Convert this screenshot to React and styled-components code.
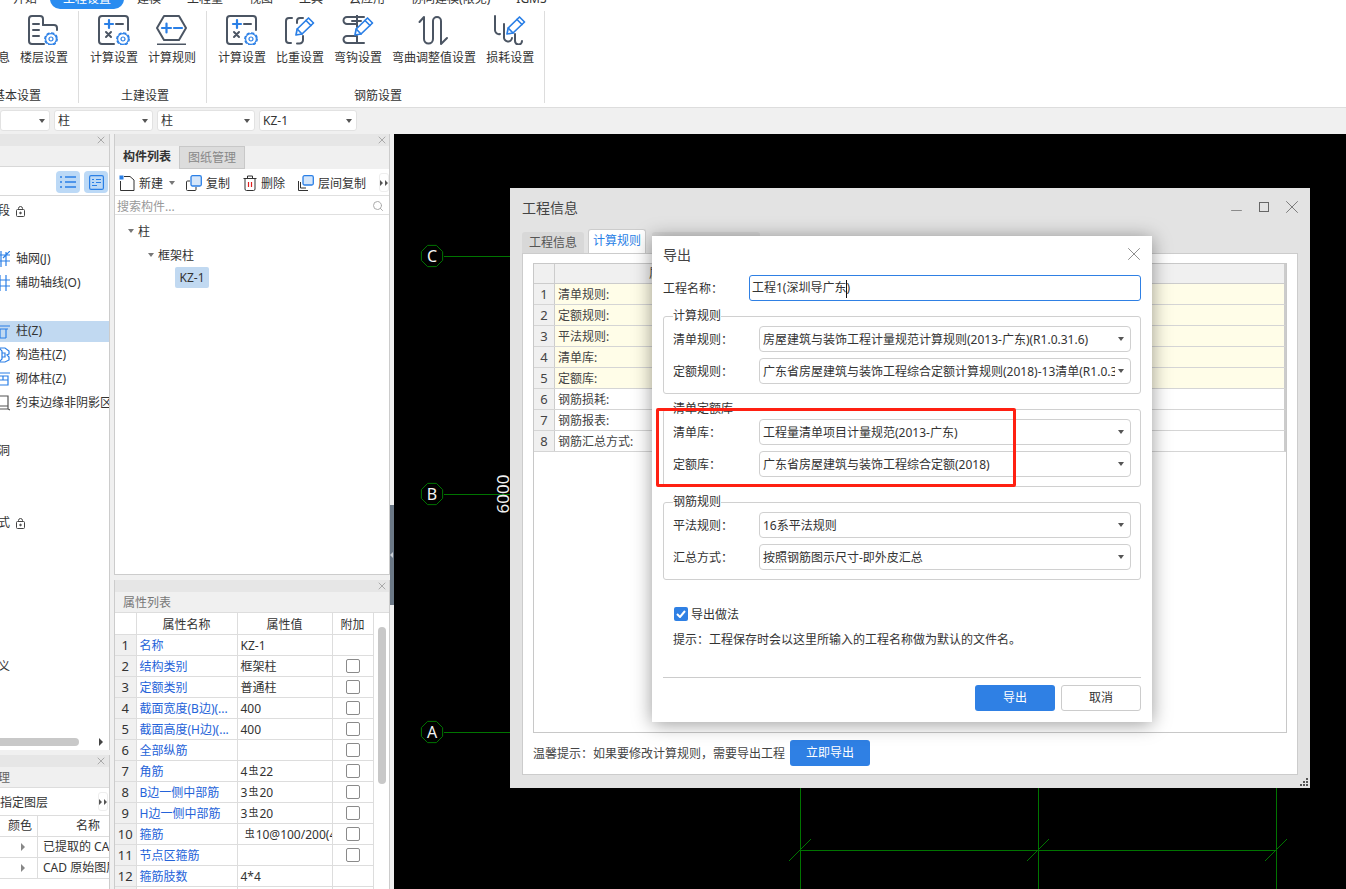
import React from 'react'
import styled, { createGlobalStyle } from 'styled-components'
import { X, Minus, Search } from 'lucide-react'

const DARK = '#4b5563'
const BLUE = '#2a7fe6'
const GRID = '#007400'

const GlobalStyle = createGlobalStyle`
  html, body {
    margin: 0;
    padding: 0;
    background: #f0f0f0;
  }
  body {
    font-family: "Noto Sans", "Noto Sans CJK SC", sans-serif;
    font-size: 12px;
    color: #333;
    overflow: hidden;
  }
  * { box-sizing: border-box; }
`

const Gear = ({ x, y }) => (
  <g transform={`translate(${x} ${y})`} fill="none" stroke={BLUE}>
    <circle r="5.4" strokeWidth="1.2" />
    <circle r="6.2" strokeWidth="1.4" strokeDasharray="2.2 2.66" />
    <circle r="2" strokeWidth="1.2" />
  </g>
)

const Pencil = ({ x, y }) => (
  <g transform={`translate(${x} ${y})`} fill="#fff" stroke={BLUE} strokeWidth="1.7" strokeLinejoin="round">
    <path d="M0 18 L1.2 12 L12.5 1 L17.5 6 L6 17 Z" />
    <path d="M1.2 12 L6 17 M10 3.5 L15 8.5" fill="none" />
  </g>
)

const Ico = ({ children }) => (
  <svg width="32" height="30" viewBox="0 0 32 30" fill="none" stroke={DARK} strokeWidth="2" strokeLinecap="round" strokeLinejoin="round">
    {children}
  </svg>
)

const FloorIcon = () => (
  <Ico>
    <path d="M15 10 V4 a3 3 0 0 0-3-3 H4 a3 3 0 0 0-3 3 V26 a3 3 0 0 0 3 3 H16" />
    <path d="M15 10 H26 a3 3 0 0 1 3 3 V15" />
    <path d="M5 9 H11 M5 15 H11 M5 21 H11" />
    <Gear x={23} y={24} />
  </Ico>
)

const CalcIcon = () => (
  <Ico>
    <path d="M30 15 V4 a3 3 0 0 0-3-3 H4 a3 3 0 0 0-3 3 V26 a3 3 0 0 0 3 3 H16" />
    <path d="M7 9 H15 M11 5 V13" stroke={BLUE} strokeWidth="2.2" />
    <path d="M18 9 H25" />
    <path d="M8 17 L13 22 M13 17 L8 22" />
    <Gear x={25} y={24} />
  </Ico>
)

const RuleIcon = () => (
  <Ico>
    <path d="M8 1 H23 L30 13 L23 25 H8 L1 13 Z" />
    <path d="M6 13 H15 M10.5 8.5 V17.5 M18 13 H26" stroke={BLUE} strokeWidth="2.2" />
    <path d="M1 29.5 H30" strokeLinecap="butt" />
  </Ico>
)

const RatioIcon = () => (
  <Ico>
    <path d="M8 3 H5 a3 3 0 0 0-3 3 V25 a3 3 0 0 0 3 3 H7" />
    <path d="M13 8 V6 a3 3 0 0 1 3-3 H19" />
    <path d="M19 21 V25 a3.5 3.5 0 0 1-3.5 3.5 H13" />
    <Pencil x={12} y={2} />
  </Ico>
)

const HookIcon = () => (
  <Ico>
    <path d="M22 2 H5 a3.5 3.5 0 0 0 0 7 H15" />
    <path d="M15 0 V12 M10 6 H19" />
    <path d="M15 21 V28 M22 28 H5 a3.5 3.5 0 0 1 0-7 H15" />
    <Pencil x={13} y={2} />
  </Ico>
)

const BendIcon = () => (
  <Ico>
    <path d="M1.5 7 L6 2 V24 a4.5 4.5 0 0 0 9 0 V6 a4 4 0 0 1 8 0 V29 L29 23" />
  </Ico>
)

const LossIcon = () => (
  <Ico>
    <path d="M1 1 V15 a4 4 0 0 0 5 4" />
    <path d="M10 9 V22 a4 4 0 0 0 8 1" />
    <path d="M21 19 V26 a3.5 3.5 0 0 0 7 0" />
    <Pencil x={13} y={1} />
  </Ico>
)

const MoreIcon = () => (
  <svg width="8" height="6" viewBox="0 0 8 6" fill="#555">
    <path d="M0 0 L3 3 L0 6 Z M5 0 L8 3 L5 6 Z" />
  </svg>
)

const topTabs = ['开始', '工程设置', '建模', '工程量', '视图', '工具', '云应用', '协同建模(限免)', 'IGMS']

const ribbonGroups = [
  {
    title: '基本设置',
    items: [
      { label: '工程信息', icon: <FloorIcon /> },
      { label: '楼层设置', icon: <FloorIcon /> },
    ],
  },
  {
    title: '土建设置',
    items: [
      { label: '计算设置', icon: <CalcIcon /> },
      { label: '计算规则', icon: <RuleIcon /> },
    ],
  },
  {
    title: '钢筋设置',
    items: [
      { label: '计算设置', icon: <CalcIcon /> },
      { label: '比重设置', icon: <RatioIcon /> },
      { label: '弯钩设置', icon: <HookIcon /> },
      { label: '弯曲调整值设置', icon: <BendIcon /> },
      { label: '损耗设置', icon: <LossIcon /> },
    ],
  },
]

const LockIcon = () => (
  <svg width="9" height="11" viewBox="0 0 9 11" fill="none" stroke="#444" strokeWidth="1">
    <rect x="0.5" y="3.5" width="8" height="7" rx="1" />
    <path d="M2.5 3.5 V2.5 a2 2 0 0 1 4 0 V3.5" />
    <circle cx="4.5" cy="7" r="0.8" fill="#444" />
  </svg>
)

const RowIcon = ({ kind }) => (
  <svg width="14" height="16" viewBox="0 0 14 16" fill="none" stroke="#2a7fe6" strokeWidth="1.2">
    {kind === 'axis' && <path d="M0 4 H14 M0 10 H14 M5 0 V16 M10 1 V15 M14 0 L7 7" />}
    {kind === 'aux' && <path d="M0 5 H14 M0 11 H14 M4 0 V16 M10 0 V16" />}
    {kind === 'col' && <path d="M0 3 H14 M2 6 H12 M4 6 V15 H10 M10 6 V15" />}
    {kind === 'tie' && <path d="M3 1 H9 L13 4 V7 L11 8 L13 10 V13 L9 15 H3 L6 12 V4 Z M6 6 H9 V10 H6" />}
    {kind === 'brick' && <path d="M0 2 H14 M2 5 H12 V14 H2 M2 9 H12 M7 5 V9" />}
    {kind === 'edge' && <path d="M3 1 H12 V14 H1 M12 14 L14 15 M3 14 V11 H12" stroke="#555" />}
  </svg>
)

const leftRows = [
  { text: '段', lock: true },
  {},
  { text: '轴网(J)', icon: 'axis' },
  { text: '辅助轴线(O)', icon: 'aux' },
  {},
  { text: '柱(Z)', icon: 'col', active: true },
  { text: '构造柱(Z)', icon: 'tie' },
  { text: '砌体柱(Z)', icon: 'brick' },
  { text: '约束边缘非阴影区', icon: 'edge' },
  {},
  { text: '洞' },
  {},
  {},
  { text: '式', lock: true },
  {},
  {},
  {},
  {},
  {},
  { text: '义' },
]

const Rebar = () => <RebarMark>虫</RebarMark>

const attrs = [
  { name: '名称', value: 'KZ-1', noCheck: true },
  { name: '结构类别', value: '框架柱' },
  { name: '定额类别', value: '普通柱' },
  { name: '截面宽度(B边)(...', value: '400' },
  { name: '截面高度(H边)(...', value: '400' },
  { name: '全部纵筋', value: '' },
  { name: '角筋', value: <>4<Rebar />22</> },
  { name: 'B边一侧中部筋', value: <>3<Rebar />20</> },
  { name: 'H边一侧中部筋', value: <>3<Rebar />20</> },
  { name: '箍筋', value: <>&nbsp;<Rebar />10@100/200(4*4)</> },
  { name: '节点区箍筋', value: '' },
  { name: '箍筋肢数', value: '4*4', noCheck: true },
  { name: '柱类型', value: '(中柱)', noCheck: true },
]

const ruleRows = ['清单规则:', '定额规则:', '平法规则:', '清单库:', '定额库:', '钢筋损耗:', '钢筋报表:', '钢筋汇总方式:']

const exportGroups = [
  {
    legend: '计算规则',
    rows: [
      ['清单规则：', '房屋建筑与装饰工程计量规范计算规则(2013-广东)(R1.0.31.6)'],
      ['定额规则：', '广东省房屋建筑与装饰工程综合定额计算规则(2018)-13清单(R1.0.31.6)'],
    ],
  },
  {
    legend: '清单定额库',
    rows: [
      ['清单库：', '工程量清单项目计量规范(2013-广东)'],
      ['定额库：', '广东省房屋建筑与装饰工程综合定额(2018)'],
    ],
  },
  {
    legend: '钢筋规则',
    rows: [
      ['平法规则：', '16系平法规则'],
      ['汇总方式：', '按照钢筋图示尺寸-即外皮汇总'],
    ],
  },
]

const AxisBubble = ({ y, label }) => {
  const pts = Array.from({ length: 8 }, (_, i) => {
    const a = (Math.PI / 4) * i + Math.PI / 8
    return `${38 + 11.5 * Math.cos(a)},${y + 11.5 * Math.sin(a)}`
  }).join(' ')
  return (
    <g>
      <polygon points={pts} fill="none" stroke={GRID} />
      <line x1="50" y1={y} x2="120" y2={y} stroke={GRID} shapeRendering="crispEdges" />
      <text x="38" y={y + 6} textAnchor="middle" fontSize="16" fill="#f4f4f4" stroke="none">{label}</text>
    </g>
  )
}

const Tick = ({ x, y }) => <line x1={x - 11} y1={y + 11} x2={x + 11} y2={y - 11} stroke={GRID} />

function App() {
  return (
    <>
      <GlobalStyle />
      <Page>
        <TopBar>
          {topTabs.map((t) => (
            <TopTab key={t} $active={t === '工程设置'}>{t}</TopTab>
          ))}
        </TopBar>

        <Ribbon>
          {ribbonGroups.map((g, i) => (
            <RibbonGroup key={g.title} $first={i === 0}>
              <RibbonItems>
                {g.items.map((it) => (
                  <RibbonItem key={it.label}>
                    {it.icon}
                    <span>{it.label}</span>
                  </RibbonItem>
                ))}
              </RibbonItems>
              <GroupTitle>{g.title}</GroupTitle>
            </RibbonGroup>
          ))}
        </Ribbon>

        <SelectBar>
          <BarSelect $width={50} />
          <BarSelect $width={99}>柱</BarSelect>
          <BarSelect $width={98}>柱</BarSelect>
          <BarSelect $width={98}>KZ-1</BarSelect>
        </SelectBar>

        <Main>
          <LeftColumn>
            <NavPanel>
              <PanelStrip><X size={12} /></PanelStrip>
              <BlankTabs />
              <ViewToggles>
                <ToggleButton>
                  <svg width="16" height="14" viewBox="0 0 16 14" fill="none" stroke={BLUE} strokeWidth="1.3">
                    <path d="M5 2 H16 M5 7 H16 M5 12 H16 M0 2 H2 M0 7 H2 M0 12 H2" />
                  </svg>
                </ToggleButton>
                <ToggleButton>
                  <svg width="15" height="15" viewBox="0 0 15 15" fill="none" stroke={BLUE} strokeWidth="1.2">
                    <rect x="0.6" y="0.6" width="13.8" height="13.8" rx="1.5" />
                    <path d="M3 4.5 H5 M7 4.5 H12 M3 7.5 H5 M7 7.5 H12 M3 10.5 H8" />
                  </svg>
                </ToggleButton>
              </ViewToggles>
              <NavList>
                {leftRows.map((r, i) => (
                  <NavRow key={i}>
                    {r.text && (
                      <NavInner $active={r.active}>
                        {r.icon && <RowIcon kind={r.icon} />}
                        <NavText $clipped={!r.icon}>{r.text}</NavText>
                        {r.lock && <LockIcon />}
                      </NavInner>
                    )}
                  </NavRow>
                ))}
              </NavList>
              <HScroll>
                <HThumb />
                <HArrow />
              </HScroll>
            </NavPanel>

            <LayerPanel>
              <PanelStrip><X size={12} /></PanelStrip>
              <LayerHead>理</LayerHead>
              <LayerTools>
                <span>指定图层</span>
                <MoreButton><MoreIcon /></MoreButton>
              </LayerTools>
              <LayerRow>
                <LayerCell>颜色</LayerCell>
                <LayerCell $name $head>名称</LayerCell>
              </LayerRow>
              <LayerRow>
                <LayerCell $arrow><HArrow /></LayerCell>
                <LayerCell $name>已提取的 CAD 图层</LayerCell>
              </LayerRow>
              <LayerRow>
                <LayerCell $arrow><HArrow /></LayerCell>
                <LayerCell $name>CAD 原始图层</LayerCell>
              </LayerRow>
            </LayerPanel>
          </LeftColumn>

          <MidColumn>
            <PartsPanel>
              <PanelStrip><X size={12} /></PanelStrip>
              <PanelTabs>
                <PanelTab $active>构件列表</PanelTab>
                <PanelTab>图纸管理</PanelTab>
              </PanelTabs>
              <PartsTools>
                <ToolButton>
                  <svg width="16" height="16" viewBox="0 0 16 16" fill="none" stroke="#333" strokeWidth="1">
                    <path d="M5 1.5 H11 L15 5 V15.5 H1.5 V6" />
                    <rect x="0.5" y="0.5" width="4" height="4" fill={BLUE} stroke="none" />
                  </svg>
                  新建
                  <SmallCaret $margin={2} />
                </ToolButton>
                <ToolButton $gap={11}>
                  <svg width="16" height="16" viewBox="0 0 16 16" fill="none" stroke="#333" strokeWidth="1">
                    <path d="M4 6 H1.5 a1 1 0 0 0-1 1 V14.5 a1 1 0 0 0 1 1 H9 a1 1 0 0 0 1-1 V12" />
                    <rect x="5" y="0.7" width="10.3" height="10.3" rx="1.5" fill="#d5e6fa" stroke={BLUE} strokeWidth="1.3" />
                  </svg>
                  复制
                </ToolButton>
                <ToolButton $gap={13}>
                  <svg width="14" height="16" viewBox="0 0 14 16" fill="none" stroke="#333" strokeWidth="1">
                    <path d="M0.5 3.5 H13.5 M4.5 3.5 V1 H9.5 V3.5 M2 3.5 V14 a1.5 1.5 0 0 0 1.5 1.5 H10.5 a1.5 1.5 0 0 0 1.5-1.5 V3.5" />
                    <path d="M5.5 7 V12 M8.5 7 V12" stroke="#e02020" strokeWidth="1.2" />
                  </svg>
                  删除
                </ToolButton>
                <ToolButton $gap={13}>
                  <svg width="16" height="16" viewBox="0 0 16 16" fill="none" stroke="#333" strokeWidth="1">
                    <path d="M2.5 7 V13 H8 M0.5 6 V15.5 H10" />
                    <rect x="5" y="0.7" width="10.3" height="9.3" rx="1.5" fill="#d5e6fa" stroke={BLUE} strokeWidth="1.3" />
                  </svg>
                  层间复制
                </ToolButton>
                <MoreButton><MoreIcon /></MoreButton>
              </PartsTools>
              <SearchRow>
                <span>搜索构件...</span>
                <Search size={12} color="#aaa" />
              </SearchRow>
              <Tree>
                <TreeRow $depth={0}><SmallCaret $margin={0} />柱</TreeRow>
                <TreeRow $depth={1}><SmallCaret $margin={0} />框架柱</TreeRow>
                <TreeLeaf>KZ-1</TreeLeaf>
              </Tree>
            </PartsPanel>

            <PropsPanel>
              <PanelStrip><X size={12} /></PanelStrip>
              <PropsTitle>属性列表</PropsTitle>
              <PropsBody>
                <PropsTable>
                  <colgroup>
                    <col width="21" />
                    <col width="101" />
                    <col width="95" />
                    <col width="41" />
                  </colgroup>
                  <thead>
                    <tr>
                      <PropHead />
                      <PropHead>属性名称</PropHead>
                      <PropHead>属性值</PropHead>
                      <PropHead>附加</PropHead>
                    </tr>
                  </thead>
                  <tbody>
                    {attrs.map((a, i) => (
                      <tr key={a.name}>
                        <NumCell>{i + 1}</NumCell>
                        <NameCell>{a.name}</NameCell>
                        <ValueCell>{a.value}</ValueCell>
                        <CheckCell>{!a.noCheck && <TableCheck />}</CheckCell>
                      </tr>
                    ))}
                  </tbody>
                </PropsTable>
                <ScrollTrack><ScrollThumb /></ScrollTrack>
              </PropsBody>
            </PropsPanel>
          </MidColumn>

          <Splitter><SplitHandle /></Splitter>

          <Canvas>
            <CadDrawing width="952" height="755">
              <AxisBubble y={122} label="C" />
              <AxisBubble y={360} label="B" />
              <AxisBubble y={598} label="A" />
              <text x="108" y="360" transform="rotate(-90 108 360)" textAnchor="middle" dominantBaseline="central" fontSize="17" fill="#f0f0f0">6000</text>
              <path d="M406 640 V755 M644 640 V755 M882 640 V755 M406 716 H882" stroke={GRID} fill="none" shapeRendering="crispEdges" />
              <Tick x={406} y={716} />
              <Tick x={644} y={716} />
              <Tick x={882} y={716} />
            </CadDrawing>

            <InfoWindow>
              <InfoTitle>
                工程信息
                <WindowButtons>
                  <MinButton size={17} color="#666" strokeWidth={1} />
                  <MaxBox />
                  <X size={22} color="#666" strokeWidth={0.9} />
                </WindowButtons>
              </InfoTitle>
              <InfoTabs>
                <InfoTab>工程信息</InfoTab>
                <InfoTab $active>计算规则</InfoTab>
                <InfoTab $wide>楼层设置</InfoTab>
              </InfoTabs>
              <InfoBody>
                <RuleBox>
                  <RuleHeader>
                    <RuleNum />
                    <RuleHeadText>属性名称</RuleHeadText>
                  </RuleHeader>
                  {ruleRows.map((r, i) => (
                    <RuleRow key={r} $filled={i < 5}>
                      <RuleNum>{i + 1}</RuleNum>
                      <RuleName>{r}</RuleName>
                    </RuleRow>
                  ))}
                </RuleBox>
                <InfoFooter>
                  温馨提示：如果要修改计算规则，需要导出工程
                  <PrimaryButton $width={80}>立即导出</PrimaryButton>
                </InfoFooter>
              </InfoBody>
              <ResizeGrip>
                <svg width="10" height="10" viewBox="0 0 10 10" fill="#555">
                  <rect x="7" y="1" width="2" height="2" />
                  <rect x="4" y="4" width="2" height="2" />
                  <rect x="7" y="4" width="2" height="2" />
                  <rect x="1" y="7" width="2" height="2" />
                  <rect x="4" y="7" width="2" height="2" />
                  <rect x="7" y="7" width="2" height="2" />
                </svg>
              </ResizeGrip>
            </InfoWindow>

            <ExportDialog>
              <ExportHeader>
                导出
                <X size={22} color="#777" strokeWidth={0.9} />
              </ExportHeader>
              <NameRow>
                <FieldLabel>工程名称：</FieldLabel>
                <NameInput>工程1(深圳导广东<Caret />)</NameInput>
              </NameRow>
              {exportGroups.map((g) => (
                <RuleGroup key={g.legend}>
                  <legend>{g.legend}</legend>
                  {g.rows.map(([label, value]) => (
                    <GroupRow key={label}>
                      <FieldLabel>{label}</FieldLabel>
                      <RuleSelect>
                        <SelectText>{value}</SelectText>
                        <SmallCaret $margin={0} />
                      </RuleSelect>
                    </GroupRow>
                  ))}
                </RuleGroup>
              ))}
              <CheckRow>
                <CheckedBox>
                  <svg width="10" height="8" viewBox="0 0 10 8" fill="none" stroke="#fff" strokeWidth="2">
                    <path d="M1 4 L4 7 L9 1" />
                  </svg>
                </CheckedBox>
                导出做法
              </CheckRow>
              <HintText>提示：工程保存时会以这里所输入的工程名称做为默认的文件名。</HintText>
              <Divider />
              <DialogButtons>
                <PrimaryButton $width={80}>导出</PrimaryButton>
                <PlainButton>取消</PlainButton>
              </DialogButtons>
              <RedMark />
            </ExportDialog>
          </Canvas>
        </Main>
      </Page>
    </>
  )
}

export default App

const Page = styled.div`
  width: 1346px;
  height: 889px;
  overflow: hidden;
  display: flex;
  flex-direction: column;
  background: #f0f0f0;
`
const TopBar = styled.div`
  height: 9px;
  flex: none;
  background: #fff;
  display: flex;
  overflow: hidden;
`
const TopTab = styled.div`
  height: 20px;
  margin-top: -11px;
  padding: 0 13px;
  line-height: 20px;
  border-radius: 10px;
  white-space: nowrap;
  color: ${(p) => (p.$active ? '#fff' : '#333')};
  background: ${(p) => (p.$active ? '#2a8cf0' : 'transparent')};
`
const Ribbon = styled.div`
  height: 99px;
  flex: none;
  display: flex;
  padding-top: 2px;
  background: #fff;
  border-bottom: 1px solid #ddd;
`
const RibbonGroup = styled.div`
  height: 92px;
  padding: 4px 10px 0 11px;
  margin-left: ${(p) => (p.$first ? '-49px' : '0')};
  display: flex;
  flex-direction: column;
  align-items: center;
  border-right: 1px solid #ddd;
`
const RibbonItems = styled.div`
  display: flex;
  gap: 10px;
`
const RibbonItem = styled.div`
  display: flex;
  flex-direction: column;
  align-items: center;
  span {
    margin-top: 5px;
    line-height: 16px;
    white-space: nowrap;
  }
`
const GroupTitle = styled.div`
  margin-top: auto;
  line-height: 16px;
  padding-left: 4px;
  transform: translateY(1px);
`
const SelectBar = styled.div`
  height: 25px;
  flex: none;
  display: flex;
  gap: 4px;
  padding-top: 2px;
  background: #f0f0f0;
`
const BarSelect = styled.div`
  width: ${(p) => p.$width}px;
  height: 21px;
  padding: 0 3px;
  line-height: 20px;
  background: #fff;
  border: 1px solid #e2e2e2;
  border-radius: 3px;
  position: relative;
  &::after {
    content: '';
    position: absolute;
    right: 4px;
    top: 8px;
    border-left: 3px solid transparent;
    border-right: 3px solid transparent;
    border-top: 4px solid #555;
  }
`
const Main = styled.div`
  flex: 1;
  min-height: 0;
  display: flex;
  padding-top: 1px;
`
const LeftColumn = styled.div`
  width: 110px;
  flex: none;
  display: flex;
  flex-direction: column;
  gap: 5px;
`
const NavPanel = styled.div`
  height: 616px;
  background: #fff;
  border-right: 1px solid #ccc;
  display: flex;
  flex-direction: column;
`
const PanelStrip = styled.div`
  height: 12px;
  flex: none;
  display: flex;
  align-items: center;
  justify-content: flex-end;
  padding-right: 2px;
  background: #e6e6e6;
  color: #aaa;
`
const BlankTabs = styled.div`
  height: 21px;
  flex: none;
  background: #f0f0f0;
  border-bottom: 1px solid #d8d8d8;
`
const ViewToggles = styled.div`
  height: 29px;
  flex: none;
  display: flex;
  justify-content: flex-end;
  align-items: center;
  gap: 4px;
  padding: 2px 1px 0 0;
  border-bottom: 1px solid #d8d8d8;
`
const ToggleButton = styled.div`
  width: 24px;
  height: 22px;
  display: flex;
  align-items: center;
  justify-content: center;
  background: #bcd9f6;
  border-radius: 4px;
`
const NavList = styled.div`
  flex: 1;
  min-height: 0;
  overflow: hidden;
  padding-top: 3px;
`
const NavRow = styled.div`
  height: 24px;
  display: flex;
  align-items: center;
`
const NavInner = styled.div`
  width: 100%;
  height: 21px;
  display: flex;
  align-items: center;
  gap: 6px;
  white-space: nowrap;
  overflow: hidden;
  background: ${(p) => (p.$active ? '#c1d9f1' : 'transparent')};
  svg:first-child {
    margin-left: -4px;
    flex: none;
  }
`
const NavText = styled.span`
  line-height: 16px;
  flex: none;
  margin-left: ${(p) => (p.$clipped ? '-2px' : '0')};
`
const HScroll = styled.div`
  height: 16px;
  flex: none;
  display: flex;
  align-items: center;
  justify-content: space-between;
  padding-right: 6px;
`
const HThumb = styled.div`
  width: 79px;
  height: 8px;
  background: #c8c8c8;
  border-radius: 0 4px 4px 0;
`
const HArrow = styled.div`
  width: 0;
  height: 0;
  border-top: 4px solid transparent;
  border-bottom: 4px solid transparent;
  border-left: 4px solid #444;
`
const LayerPanel = styled.div`
  flex: 1;
  min-height: 0;
  background: #fff;
  border-right: 1px solid #ccc;
  overflow: hidden;
`
const LayerHead = styled.div`
  height: 21px;
  line-height: 21px;
  background: #f0f0f0;
  color: #666;
  border-bottom: 1px solid #ddd;
  text-indent: -2px;
`
const LayerTools = styled.div`
  height: 28px;
  display: flex;
  align-items: center;
  justify-content: space-between;
  padding-right: 1px;
  border-bottom: 1px solid #ddd;
  white-space: nowrap;
`
const LayerRow = styled.div`
  height: 21px;
  display: grid;
  grid-template-columns: 37px minmax(0, 1fr);
  border-bottom: 1px solid #ddd;
  line-height: 20px;
  color: #333;
  white-space: nowrap;
  overflow: hidden;
`
const LayerCell = styled.div`
  padding-left: ${(p) => (p.$head ? '38px' : p.$name ? '5px' : '8px')};
  border-left: ${(p) => (p.$name ? '1px solid #ddd' : 'none')};
  overflow: hidden;
  ${(p) => p.$arrow && `
    display: flex;
    align-items: center;
    padding-left: 21px;
    div { border-left-color: #888; }
  `}
`
const MidColumn = styled.div`
  width: 276px;
  flex: none;
  margin-left: 4px;
  display: flex;
  flex-direction: column;
  gap: 5px;
`
const PartsPanel = styled.div`
  height: 441px;
  flex: none;
  background: #fff;
  border: 1px solid #ccc;
  border-top: none;
  display: flex;
  flex-direction: column;
  svg { flex: none; }
  ${PanelStrip} { padding-right: 1px; }
`
const PanelTabs = styled.div`
  height: 23px;
  flex: none;
  display: flex;
  background: #f0f0f0;
`
const PanelTab = styled.div`
  width: ${(p) => (p.$active ? '64px' : '66px')};
  text-align: center;
  line-height: 21px;
  font-weight: ${(p) => (p.$active ? 600 : 400)};
  color: ${(p) => (p.$active ? '#333' : '#888')};
  background: ${(p) => (p.$active ? '#f0f0f0' : '#dcdcdc')};
  border: ${(p) => (p.$active ? 'none' : '1px solid #c8c8c8')};
`
const PartsTools = styled.div`
  height: 27px;
  flex: none;
  display: flex;
  align-items: center;
  padding: 1px 0 0 4px;
  border-bottom: 1px solid #e0e0e0;
  white-space: nowrap;
`
const ToolButton = styled.div`
  display: flex;
  align-items: center;
  gap: 4px;
  margin-left: ${(p) => p.$gap || 0}px;
`
const MoreButton = styled.div`
  width: 10px;
  height: 19px;
  margin-left: auto;
  display: flex;
  align-items: center;
  justify-content: center;
  background: #fff;
  border: 1px solid #eee;
  border-radius: 3px;
`
const SmallCaret = styled.i`
  display: block;
  flex: none;
  width: 0;
  height: 0;
  margin-left: ${(p) => p.$margin}px;
  border-left: 3px solid transparent;
  border-right: 3px solid transparent;
  border-top: 4px solid #777;
`
const SearchRow = styled.div`
  height: 19px;
  flex: none;
  display: flex;
  align-items: center;
  justify-content: space-between;
  padding: 2px 5px 0 2px;
  color: #999;
  border-bottom: 1px solid #e0e0e0;
`
const Tree = styled.div`
  flex: 1;
  padding-top: 4px;
`
const TreeRow = styled.div`
  height: 24px;
  display: flex;
  align-items: center;
  gap: 4px;
  padding-left: ${(p) => 13 + p.$depth * 20}px;
`
const TreeLeaf = styled.div`
  width: 34px;
  height: 21px;
  margin-left: 60px;
  line-height: 21px;
  text-align: center;
  background: #c1d9f1;
  border-radius: 2px;
`
const PropsPanel = styled.div`
  flex: 1;
  min-height: 0;
  background: #fff;
  border-left: 1px solid #ccc;
  border-right: 1px solid #ccc;
  overflow: hidden;
  ${PanelStrip} { padding-right: 1px; }
`
const PropsTitle = styled.div`
  height: 21px;
  line-height: 22px;
  padding-left: 8px;
  color: #777;
  background: #f0f0f0;
  border-bottom: 1px solid #ddd;
`
const PropsBody = styled.div`
  display: flex;
`
const PropsTable = styled.table`
  width: 258px;
  flex: none;
  table-layout: fixed;
  border-collapse: collapse;
  td, th {
    height: 21px;
    padding: 1px 0 0;
    border: 1px solid #ddd;
    border-top: none;
    font-weight: 400;
    overflow: hidden;
    white-space: nowrap;
  }
  td:first-child, th:first-child { border-left: none; }
`
const PropHead = styled.th`
  text-align: center;
  color: #333;
`
const NumCell = styled.td`
  text-align: center;
  font-size: 13px;
  background: #f0f0f0;
  color: #333;
`
const NameCell = styled.td`
  padding-left: 3px !important;
  color: #2563d9;
`
const ValueCell = styled.td`
  padding-left: 3px !important;
  color: #333;
`
const CheckCell = styled.td`
  text-align: center;
`
const TableCheck = styled.div`
  width: 14px;
  height: 14px;
  margin: 0 auto;
  background: #fff;
  border: 1px solid #8a8a8a;
  border-radius: 2px;
`
const RebarMark = styled.span`
  display: inline-block;
  font-size: 10px;
  transform: translateY(-2px);
  padding: 0 1px;
`
const ScrollTrack = styled.div`
  flex: 1;
  padding: 14px 3px 0 4px;
`
const ScrollThumb = styled.div`
  width: 8px;
  height: 157px;
  background: #c8c8c8;
  border-radius: 4px;
`
const Splitter = styled.div`
  width: 4px;
  flex: none;
`
const SplitHandle = styled.div`
  width: 4px;
  height: 100px;
  margin-top: 371px;
  display: flex;
  align-items: center;
  background: #6b7886;
  &::after {
    content: '';
    border-top: 3px solid transparent;
    border-bottom: 3px solid transparent;
    border-right: 3px solid #c9ced4;
  }
`
const Canvas = styled.div`
  flex: 1;
  position: relative;
  background: #000;
  overflow: hidden;
`
const CadDrawing = styled.svg`
  position: absolute;
  left: 0;
  top: 0;
  font-family: "Noto Sans", sans-serif;
`
const InfoWindow = styled.div`
  position: absolute;
  left: 116px;
  top: 54px;
  width: 800px;
  height: 600px;
  padding: 0 12px;
  background: #e3e3e3;
  display: flex;
  flex-direction: column;
  color: #444;
`
const InfoTitle = styled.div`
  height: 41px;
  flex: none;
  display: flex;
  align-items: center;
  justify-content: space-between;
  padding-bottom: 3px;
  font-size: 14px;
`
const WindowButtons = styled.div`
  display: flex;
  align-items: center;
  gap: 14px;
  margin-right: -5px;
  svg:last-child { margin-left: -2px; }
`
const MinButton = styled(Minus)`
  transform: translateY(3px);
`
const MaxBox = styled.div`
  width: 10px;
  height: 10px;
  border: 1px solid #666;
`
const InfoTabs = styled.div`
  height: 24px;
  flex: none;
  display: flex;
  align-items: flex-end;
  gap: 4px;
`
const InfoTab = styled.div`
  width: ${(p) => (p.$active ? '58px' : p.$wide ? '108px' : '62px')};
  height: ${(p) => (p.$active ? '24px' : '21px')};
  margin-left: ${(p) => (p.$wide ? '2px' : '0')};
  line-height: 21px;
  text-align: center;
  color: ${(p) => (p.$active ? BLUE : '#555')};
  background: ${(p) => (p.$active ? '#fff' : '#d8d8d8')};
  border: ${(p) => (p.$active ? '1px solid #ccc' : 'none')};
  border-bottom: none;
  border-radius: 3px 3px 0 0;
`
const InfoBody = styled.div`
  width: 776px;
  height: 522px;
  flex: none;
  padding: 9px 10px 0;
  background: #fff;
  border: 1px solid #ccc;
  display: flex;
  flex-direction: column;
`
const RuleBox = styled.div`
  height: 470px;
  flex: none;
  border: 1px solid #c8c8c8;
`
const RuleHeader = styled.div`
  height: 20px;
  display: flex;
  background: #f0f0f0;
  border-bottom: 1px solid #ccc;
  border-right: 2px solid #ccc;
`
const RuleHeadText = styled.div`
  padding-left: 94px;
  line-height: 19px;
  white-space: nowrap;
`
const RuleRow = styled.div`
  height: 21px;
  display: flex;
  background: ${(p) => (p.$filled ? '#fffde8' : '#fff')};
  border-bottom: 1px solid #d5d5d5;
  border-right: 2px solid #ccc;
`
const RuleNum = styled.div`
  width: 21px;
  flex: none;
  text-align: center;
  line-height: 20px;
  background: #f0f0f0;
  border-right: 1px solid #ccc;
  font-size: 13px;
`
const RuleName = styled.div`
  padding-left: 3px;
  line-height: 21px;
`
const InfoFooter = styled.div`
  flex: 1;
  display: flex;
  align-items: center;
  gap: 5px;
  padding-bottom: 1px;
`
const PrimaryButton = styled.div`
  width: ${(p) => p.$width}px;
  height: 26px;
  line-height: 26px;
  text-align: center;
  color: #fff;
  background: #2f80e4;
  border-radius: 3px;
`
const ResizeGrip = styled.div`
  position: absolute;
  right: 1px;
  bottom: 1px;
  width: 10px;
  height: 10px;
  line-height: 0;
`
const ExportDialog = styled.div`
  position: absolute;
  left: 258px;
  top: 102px;
  width: 500px;
  height: 486px;
  padding: 0 11px;
  background: #fff;
  box-shadow: 0 2px 18px rgba(0, 0, 0, 0.4);
  display: flex;
  flex-direction: column;
`
const ExportHeader = styled.div`
  height: 39px;
  flex: none;
  display: flex;
  align-items: center;
  justify-content: space-between;
  padding-bottom: 3px;
  font-size: 14px;
  color: #444;
  svg { margin-right: -4px; }
`
const NameRow = styled.div`
  display: flex;
  align-items: center;
`
const FieldLabel = styled.div`
  width: 86px;
  flex: none;
  white-space: nowrap;
  color: #333;
`
const NameInput = styled.div`
  flex: 1;
  height: 26px;
  padding-left: 2px;
  line-height: 24px;
  color: #333;
  border: 1px solid #2f80e4;
  border-radius: 3px;
`
const Caret = styled.span`
  display: inline-block;
  width: 1px;
  height: 18px;
  margin-right: -1px;
  vertical-align: middle;
  background: #111;
`
const RuleGroup = styled.fieldset`
  margin: 8px 0 0;
  padding: 3px 9px 9px;
  border: 1px solid #d0d0d0;
  border-radius: 3px;
  display: flex;
  flex-direction: column;
  gap: 6px;
  min-width: 0;
  legend {
    padding: 0;
    line-height: 14px;
    color: #333;
    background: #fff;
  }
`
const GroupRow = styled.div`
  display: flex;
  align-items: center;
`
const RuleSelect = styled.div`
  flex: 1;
  min-width: 0;
  height: 26px;
  padding: 0 6px 0 3px;
  display: flex;
  align-items: center;
  justify-content: space-between;
  gap: 3px;
  background: #fff;
  border: 1px solid #d0d0d0;
  border-radius: 4px;
  i { border-top-color: #555; }
`
const SelectText = styled.span`
  flex: 1;
  min-width: 0;
  overflow: hidden;
  white-space: nowrap;
  color: #333;
`
const CheckRow = styled.div`
  height: 14px;
  margin: 27px 0 0 11px;
  display: flex;
  align-items: center;
  gap: 3px;
  color: #333;
`
const CheckedBox = styled.div`
  width: 14px;
  height: 14px;
  display: flex;
  align-items: center;
  justify-content: center;
  background: #2f80e4;
  border-radius: 2px;
`
const HintText = styled.div`
  margin: 11px 0 0 10px;
  line-height: 16px;
  color: #333;
`
const Divider = styled.div`
  height: 1px;
  margin-top: 29px;
  flex: none;
  background: #ccc;
`
const DialogButtons = styled.div`
  margin-top: 7px;
  display: flex;
  justify-content: flex-end;
  gap: 6px;
`
const PlainButton = styled.div`
  width: 80px;
  height: 26px;
  line-height: 24px;
  text-align: center;
  color: #333;
  background: #fff;
  border: 1px solid #ccc;
  border-radius: 3px;
`
const RedMark = styled.div`
  position: absolute;
  left: 4px;
  top: 172px;
  width: 360px;
  height: 79px;
  border: 3px solid #ff2012;
  border-radius: 2px;
  pointer-events: none;
`
